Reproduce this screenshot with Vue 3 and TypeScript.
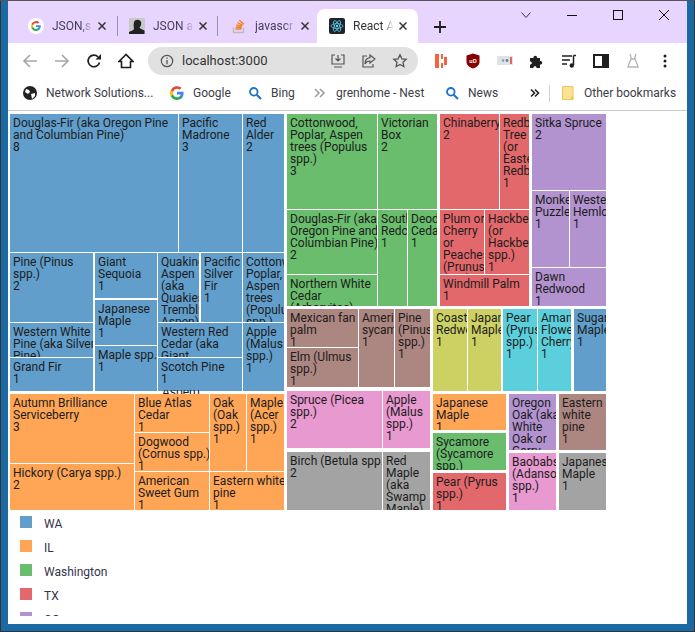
<template>
  <div class="window">
    <div class="tabstrip">
      <div class="tab tab-one">
        <svg class="fav" viewBox="0 0 16 16"><circle cx="8" cy="8" r="8" fill="#fff" /><path d="M12.8 8.2c0-.4 0-.7-.1-1H8v1.9h2.7a2.3 2.3 0 0 1-1 1.500v1.200h1.600c.9-.9 1.500-2.100 1.500-3.600z" fill="#4285f4" /><path d="M8 13c1.300 0 2.400-.4 3.300-1.200l-1.600-1.200c-.4.300-1 .5-1.700.5-1.300 0-2.400-.9-2.800-2H3.600v1.300A5 5 0 0 0 8 13z" fill="#34a853" /><path d="M5.200 9.100a3 3 0 0 1 0-2V5.800H3.600a5 5 0 0 0 0 4.500z" fill="#fbbc05" /><path d="M8 5c.7 0 1.400.3 1.900.7l1.400-1.400A5 5 0 0 0 3.600 5.800l1.600 1.300C5.600 5.900 6.700 5 8 5z" fill="#ea4335" /></svg>
        <span class="tab-title">JSON,s</span>
        <svg class="tab-close" viewBox="0 0 8 8"><path d="M.5.500l7 7M7.500.500l-7 7" /></svg>
      </div>
      <i class="tab-sep"></i>
      <div class="tab tab-two">
        <svg class="fav" viewBox="0 0 16 16"><rect width="16" height="16" fill="#c9c9c9" /><path d="M5 4c1-3 6-3 7 0 .5 2 0 4-1.500 5.500 1 1.500 3 2 5 3V16H0v-2c2-1 4-1.500 5-3C4.500 9 4.500 6 5 4z" fill="#222" /></svg>
        <span class="tab-title">JSON a</span>
        <svg class="tab-close" viewBox="0 0 8 8"><path d="M.5.500l7 7M7.500.500l-7 7" /></svg>
      </div>
      <i class="tab-sep tab-sep-wide"></i>
      <div class="tab tab-three">
        <svg class="fav" viewBox="0 0 16 16"><path d="M2.500 9.500v5h10v-5" fill="none" stroke="#bcbbbb" stroke-width="1.400" /><path d="M4.500 11h6M4.700 9l6 .5M5.300 6.800l5.800 1.600M6.400 4.500l5.300 2.800M8.300 2.200l4.500 4" stroke="#f48024" stroke-width="1.400" fill="none" /></svg>
        <span class="tab-title">javascr</span>
        <svg class="tab-close" viewBox="0 0 8 8"><path d="M.5.500l7 7M7.500.500l-7 7" /></svg>
      </div>
      <div class="tab tab-active">
        <svg class="fav" viewBox="0 0 16 16"><rect width="16" height="16" rx="2" fill="#20232a" /><g fill="none" stroke="#61dafb" stroke-width=".7"><ellipse cx="8" cy="8" rx="6" ry="2.400" /><ellipse cx="8" cy="8" rx="6" ry="2.400" transform="rotate(60 8 8)" /><ellipse cx="8" cy="8" rx="6" ry="2.400" transform="rotate(120 8 8)" /></g><circle cx="8" cy="8" r="1.200" fill="#61dafb" /></svg>
        <span class="tab-title">React A</span>
        <svg class="tab-close" viewBox="0 0 8 8"><path d="M.5.500l7 7M7.500.500l-7 7" /></svg>
      </div>
      <svg class="new-tab" viewBox="0 0 12 12"><path d="M6 0v12M0 6h12" stroke="#1f1f1f" stroke-width="1.800" /></svg>
      <div class="win-controls">
        <svg viewBox="0 0 12 12" width="12" height="12"><path d="M1.500 3.500l4.500 5 4.500-5" fill="none" stroke="#333" /></svg>
        <svg viewBox="0 0 12 12" width="12" height="12"><path d="M1 6.500h10" stroke="#111" /></svg>
        <svg viewBox="0 0 12 12" width="12" height="12"><rect x="1.500" y="1.500" width="9" height="9" fill="none" stroke="#111" /></svg>
        <svg viewBox="0 0 12 12" width="12" height="12"><path d="M1 1l10 10M11 1L1 11" stroke="#111" /></svg>
      </div>
    </div>

    <div class="toolbar">
      <svg class="nav" viewBox="0 0 16 16"><path d="M15 8H2M8 2L2 8l6 6" fill="none" stroke="#a8a8a8" stroke-width="1.700" /></svg>
      <svg class="nav" viewBox="0 0 16 16"><path d="M1 8h13M8 2l6 6-6 6" fill="none" stroke="#a8a8a8" stroke-width="1.700" /></svg>
      <svg class="nav" viewBox="0 0 16 16"><path d="M13.500 9.500A5.800 5.800 0 1 1 12 3.800" fill="none" stroke="#1f1f1f" stroke-width="1.700" /><path d="M9.500 6.500H15V1z" fill="#1f1f1f" /></svg>
      <svg class="nav" viewBox="0 0 16 16"><path d="M8 1.500L1 8.500h2.500v6h9v-6H15z" fill="none" stroke="#1f1f1f" stroke-width="1.600" /></svg>
      <div class="omnibox">
        <svg class="omni-info" viewBox="0 0 14 14"><circle cx="7" cy="7" r="5.700" fill="none" stroke="#555" stroke-width="1.200" /><path d="M7 6v4.200M7 3.600v1.200" stroke="#555" stroke-width="1.300" /></svg>
        <span class="omni-url">localhost:3000</span>
        <svg class="omni-icon omni-first" viewBox="0 0 16 16"><path d="M5 2H2v9h12V2h-3M4 14h8M8 2v6M5.500 5.500L8 8l2.500-2.500" fill="none" stroke="#555" stroke-width="1.200" /></svg>
        <svg class="omni-icon" viewBox="0 0 16 16"><path d="M6 3H2v11h10v-3M9 2l5 4-5 4V8C6.500 8 5 9 4 11c0-4 2-6 5-6.300z" fill="none" stroke="#555" stroke-width="1.200" /></svg>
        <svg class="omni-icon" viewBox="0 0 16 16"><path d="M8 1.800l1.900 4 4.300.5-3.200 3 .9 4.300L8 11.500l-3.900 2.100.9-4.300-3.200-3 4.300-.5z" fill="none" stroke="#555" stroke-width="1.300" /></svg>
      </div>
      <div class="extensions">
        <svg viewBox="0 0 16 16"><path d="M2 1h4v14H2zM8 1h2v5H8zM8 10h2v5H8zM11 4h3v8h-3z" fill="#f4633f" /></svg>
        <svg viewBox="0 0 16 16"><path d="M8 .5L14.500 2.500V9c0 3-3 5.500-6.500 6.500C4.500 14.500 1.500 12 1.500 9V2.500z" fill="#800" /><text x="8" y="9.500" class="ub">uD</text></svg>
        <svg viewBox="0 0 16 16"><rect y="3" width="16" height="9" fill="#dfe3e6" /><circle cx="6" cy="7.500" r="1.200" fill="#7a9cc0" /><circle cx="10" cy="7.500" r="1.400" fill="#5d7ba3" /><rect x="13" y="4" width="2" height="7" fill="#d96a5e" /></svg>
        <svg viewBox="0 0 16 16"><path d="M1 5h3.500c-.5-3 4-3 3.500 0H11v3c3-.5 3 4 0 3.500V15H7.500c.5-2.500-3.500-2.500-3 0H1v-3.500c2.500.5 2.500-3.500 0-3z" fill="#1f1f1f" /></svg>
        <svg viewBox="0 0 16 16"><path d="M1 3h10M1 7h8M1 11h5" stroke="#1f1f1f" stroke-width="1.500" /><path d="M12.500 2.500v9.500" stroke="#1f1f1f" stroke-width="1.500" /><circle cx="10.800" cy="12.500" r="2.200" fill="#1f1f1f" /><path d="M12.500 2.500H15" stroke="#1f1f1f" stroke-width="1.500" /></svg>
        <svg viewBox="0 0 16 16"><rect x="1" y="2" width="14" height="12" fill="#fff" stroke="#1f1f1f" stroke-width="2" /><rect x="9" y="2" width="6" height="12" fill="#1f1f1f" /></svg>
        <svg viewBox="0 0 16 16"><path d="M5 1l1.500 5M11 1L9.500 6M6 6c-1 3-2.500 5-3 8h10c-.5-3-2-5-3-8z" fill="none" stroke="#b5b5b5" stroke-width="1.300" /></svg>
        <svg viewBox="0 0 16 16"><circle cx="8" cy="3" r="1.500" fill="#1f1f1f" /><circle cx="8" cy="8" r="1.500" fill="#1f1f1f" /><circle cx="8" cy="13" r="1.500" fill="#1f1f1f" /></svg>
      </div>
    </div>

    <div class="bookmarks">
      <div class="mark mark-network">
        <svg viewBox="0 0 14 14"><circle cx="7" cy="7" r="7" fill="#222" /><path d="M3 3l3 1 1 2-2 2-3-2zM8 8l4-1 0 3-3 3z" fill="#fff" /></svg>
        <span>Network Solutions...</span>
      </div>
      <div class="mark mark-google">
        <svg viewBox="0 0 16 16"><path d="M15.500 8.200c0-.6 0-1-.1-1.500H8v2.900h4.300a3.600 3.600 0 0 1-1.600 2.400v2h2.600c1.500-1.400 2.200-3.400 2.200-5.800z" fill="#4285f4" /><path d="M8 16c2.100 0 3.900-.7 5.300-1.900l-2.600-2c-.7.500-1.600.8-2.700.8-2.100 0-3.800-1.400-4.400-3.200H1v2A8 8 0 0 0 8 16z" fill="#34a853" /><path d="M3.600 9.700a4.800 4.800 0 0 1 0-3.100v-2H1a8 8 0 0 0 0 7.100z" fill="#fbbc05" /><path d="M8 3.200c1.200 0 2.200.4 3 1.200l2.300-2.300A8 8 0 0 0 1 4.600l2.600 2C4.200 4.700 5.900 3.200 8 3.200z" fill="#ea4335" /></svg>
        <span>Google</span>
      </div>
      <div class="mark mark-bing">
        <svg viewBox="0 0 14 14"><circle cx="5.800" cy="5.800" r="3.800" fill="none" stroke="#1a73c8" stroke-width="1.800" /><path d="M8.700 8.700L13 13" stroke="#1a73c8" stroke-width="2" /></svg>
        <span>Bing</span>
      </div>
      <div class="mark mark-nest">
        <svg viewBox="0 0 14 14"><path d="M2 3l4 4-4 4M7 3l4 4-4 4" fill="none" stroke="#9a9a9a" stroke-width="1.500" /></svg>
        <span>grenhome - Nest</span>
      </div>
      <div class="mark mark-news">
        <svg viewBox="0 0 14 14"><circle cx="5.800" cy="5.800" r="3.800" fill="none" stroke="#1a73c8" stroke-width="1.800" /><path d="M8.700 8.700L13 13" stroke="#1a73c8" stroke-width="2" /></svg>
        <span>News</span>
      </div>
      <svg class="mark-more" viewBox="0 0 10 10"><path d="M1 1.500L4.500 5 1 8.500M5 1.500L8.500 5 5 8.500" fill="none" stroke="#222" stroke-width="1.600" /></svg>
      <i class="mark-sep"></i>
      <div class="mark mark-other">
        <svg viewBox="0 0 12 14"><path d="M.5.500h10.500v13H.5z" fill="#fde293" stroke="#e8c75c" /><rect x="9" y="10.500" width="2.500" height="3" fill="#f3ca4d" /></svg>
        <span>Other bookmarks</span>
      </div>
    </div>

    <div class="page">
      <div class="treemap">
        <div
          v-for="cell in cells"
          :key="cell.label + cell.x + cell.y"
          class="cell"
          :style="cellStyle(cell)"
        >
          <div class="cell-label">{{ cell.label }}</div>
          <div>{{ cell.size }}</div>
        </div>
        <!-- a clipped line that spills over the gap under the blue group -->
        <span class="spill">Aspen)</span>
      </div>
      <ul class="legend">
        <li v-for="item in legend" :key="item.name">
          <i class="swatch" :style="{ background: item.color }"></i>
          <span class="legend-name">{{ item.name }}</span>
        </li>
      </ul>
    </div>
  </div>
</template>

<script setup lang="ts">
interface Cell {
  label: string;
  size: number;
  color: string;
  // edges are in window pixels, converted to map offsets in cellStyle
  x: number;
  y: number;
  r: number;
  b: number;
}

const blue = '#619ecb';
const orange = '#ffa556';
const green = '#69bd6d';
const red = '#e3686b';
const purple = '#b293cf';
const brown = '#ac8680';
const pink = '#e899cf';
const gray = '#a3a3a3';
const yellow = '#cdd164';
const cyan = '#5ccfdc';

const row = (color: string, list: [string, number, number, number, number, number][]): Cell[] =>
  list.map(([label, size, x, y, r, b]) => ({ label, size, color, x, y, r, b }));

const cells: Cell[] = [
  ...row(blue, [
    ['Douglas-Fir (aka Oregon Pine and Columbian Pine)', 8, 10, 114, 178, 252],
    ['Pacific Madrone', 3, 179, 114, 242, 252],
    ['Red Alder', 2, 243, 114, 284, 252],
    ['Pine (Pinus spp.)', 2, 10, 253, 93, 322],
    ['Giant Sequoia', 1, 95, 253, 157, 298],
    ['Japanese Maple', 1, 95, 300, 157, 345],
    ['Maple spp.', 1, 95, 346, 157, 391],
    ['Quaking Aspen (aka Quakies Trembling Aspen)', 1, 158, 253, 199, 322],
    ['Pacific Silver Fir', 1, 201, 253, 242, 322],
    ['Cottonwood, Poplar, Aspen trees (Populus spp.)', 1, 243, 253, 284, 322],
    ['Western White Pine (aka Silver Pine)', 1, 10, 323, 93, 357],
    ['Grand Fir', 1, 10, 358, 93, 391],
    ['Western Red Cedar (aka Giant Arborvitae)', 1, 158, 323, 242, 357],
    ['Scotch Pine', 1, 158, 358, 242, 391],
    ['Apple (Malus spp.)', 1, 243, 323, 284, 391],
    ['Sugar Maple', 1, 574, 309, 606, 391],
  ]),
  ...row(green, [
    ['Cottonwood, Poplar, Aspen trees (Populus spp.)', 3, 287, 114, 377, 209],
    ['Victorian Box', 2, 378, 114, 437, 209],
    ['Douglas-Fir (aka Oregon Pine and Columbian Pine)', 2, 287, 210, 377, 274],
    ['Northern White Cedar (Arborvitae)', 1, 287, 275, 377, 306],
    ['Southern Redcedar', 1, 378, 210, 407, 306],
    ['Deodar Cedar', 1, 408, 210, 437, 306],
    ['Sycamore (Sycamore spp.)', 1, 433, 433, 506, 470],
  ]),
  ...row(red, [
    ['Chinaberry', 2, 440, 114, 499, 209],
    ['Redbud Tree (or Eastern Redbud)', 1, 500, 114, 529, 209],
    ['Plum or Cherry or Peaches (Prunus spp.)', 1, 440, 210, 484, 274],
    ['Hackberry (or Hackberry spp.)', 1, 485, 210, 529, 274],
    ['Windmill Palm', 1, 440, 275, 529, 306],
    ['Pear (Pyrus spp.)', 1, 433, 473, 506, 510],
  ]),
  ...row(purple, [
    ['Sitka Spruce', 2, 532, 114, 606, 190],
    ['Monkey Puzzle', 1, 532, 191, 569, 267],
    ['Western Hemlock', 1, 570, 191, 606, 267],
    ['Dawn Redwood', 1, 532, 268, 606, 306],
    ['Oregon Oak (aka White Oak or Garry Oak)', 1, 509, 394, 556, 450],
  ]),
  ...row(brown, [
    ['Mexican fan palm', 1, 287, 309, 358, 347],
    ['Elm (Ulmus spp.)', 1, 287, 348, 358, 387],
    ['American sycamore', 1, 359, 309, 394, 387],
    ['Pine (Pinus spp.)', 1, 395, 309, 430, 387],
    ['Eastern white pine', 1, 559, 394, 606, 450],
  ]),
  ...row(yellow, [
    ['Coast Redwood', 1, 433, 309, 467, 391],
    ['Japanese Maple', 1, 468, 309, 501, 391],
  ]),
  ...row(cyan, [
    ['Pear (Pyrus spp.)', 1, 503, 309, 537, 391],
    ['Amanogawa Flowering Cherry', 1, 538, 309, 571, 391],
  ]),
  ...row(orange, [
    ['Autumn Brilliance Serviceberry', 3, 10, 394, 134, 463],
    ['Hickory (Carya spp.)', 2, 10, 464, 134, 510],
    ['Blue Atlas Cedar', 1, 135, 394, 209, 432],
    ['Dogwood (Cornus spp.)', 1, 135, 433, 209, 471],
    ['American Sweet Gum', 1, 135, 472, 209, 510],
    ['Oak (Oak spp.)', 1, 210, 394, 246, 471],
    ['Maple (Acer spp.)', 1, 247, 394, 284, 471],
    ['Eastern white pine', 1, 210, 472, 284, 510],
    ['Japanese Maple', 1, 433, 394, 506, 430],
  ]),
  ...row(pink, [
    ['Spruce (Picea spp.)', 2, 287, 391, 382, 448],
    ['Apple (Malus spp.)', 1, 383, 391, 430, 448],
    ['Baobabs (Adansonia spp.)', 1, 509, 453, 556, 510],
  ]),
  ...row(gray, [
    ['Birch\u00a0(Betula\u00a0spp.)', 2, 287, 452, 382, 510],
    ['Red Maple (aka Swamp Maple)', 1, 383, 452, 430, 510],
    ['Japanese Maple', 1, 559, 453, 606, 510],
  ]),
];

const legend = [
  { name: 'WA', color: blue },
  { name: 'IL', color: orange },
  { name: 'Washington', color: green },
  { name: 'TX', color: red },
  { name: 'CO', color: purple },
];

// map origin is at window pixel (10, 114)
const cellStyle = (cell: Cell) => ({
  left: `${cell.x - 10}px`,
  top: `${cell.y - 114}px`,
  width: `${cell.r - cell.x}px`,
  height: `${cell.b - cell.y}px`,
  background: cell.color,
});
</script>

<style>
html,
body {
  margin: 0;
  overflow: hidden;
}
</style>

<style scoped>
.window {
  width: 695px;
  height: 632px;
  box-sizing: border-box;
  display: flex;
  flex-direction: column;
  padding: 1px 8px 8px;
  background: #1b6aa3;
  box-shadow: inset 0 1px 0 #555, inset 1px 0 0 #333, inset 0 -1px 0 #333, inset -1px 0 0 #333;
  font-family: "Roboto", "Liberation Sans", sans-serif;
  overflow: hidden;
}

.tabstrip {
  height: 42px;
  flex: none;
  display: flex;
  align-items: flex-end;
  padding-left: 12px;
  background: #e8d5ff;
}

.tab {
  height: 34px;
  box-sizing: border-box;
  flex: none;
  display: flex;
  align-items: center;
  padding: 0 8px;
  font-size: 12px;
  color: #45405a;
}

.tab-one {
  width: 97px;
}

.tab-two {
  width: 96px;
}

.tab-three {
  width: 94px;
}

.tab-active {
  width: 101px;
  padding-left: 12px;
  background: #fff;
  border-radius: 8px 8px 0 0;
  color: #333;
}

.fav {
  width: 16px;
  height: 16px;
  flex: none;
  margin-right: 8px;
}

.tab-title {
  width: 41px;
  overflow: hidden;
  white-space: nowrap;
  -webkit-mask-image: linear-gradient(90deg, #000 70%, transparent);
  mask-image: linear-gradient(90deg, #000 70%, transparent);
}

.tab-close {
  width: 8px;
  height: 8px;
  flex: none;
  margin-left: 5px;
  fill: none;
  stroke: #333;
  stroke-width: 1.500;
}

.tab-sep {
  width: 1px;
  height: 20px;
  flex: none;
  margin: 0 3px 7px 0;
  background: #9c8fa8;
}

.tab-sep-wide {
  margin-right: 5px;
}

.new-tab {
  width: 12px;
  height: 12px;
  flex: none;
  margin: 0 0 10px 16px;
}

.win-controls {
  align-self: flex-start;
  display: flex;
  gap: 34px;
  margin: 8px 0 0 74px;
}

.toolbar {
  height: 35px;
  flex: none;
  display: flex;
  align-items: center;
  padding-left: 14px;
  background: #fff;
}

.nav {
  width: 16px;
  height: 16px;
  flex: none;
  margin-right: 16px;
}

.omnibox {
  width: 270px;
  height: 28px;
  flex: none;
  margin-left: -2px;
  display: flex;
  align-items: center;
  box-sizing: border-box;
  padding: 0 10px 0 12px;
  border-radius: 14px;
  background: #e1e1e1;
}

.omni-info {
  width: 14px;
  height: 14px;
  flex: none;
}

.omni-url {
  margin-left: 8px;
  width: 148px;
  font-size: 13px;
  color: #333;
}

.omni-icon {
  width: 16px;
  height: 16px;
  flex: none;
  margin-left: 15px;
}

.omni-first {
  margin-left: 0;
}

.extensions {
  display: flex;
  gap: 16px;
  margin-left: 15px;
}

.extensions svg {
  width: 16px;
  height: 16px;
  flex: none;
}

.ub {
  font: 700 5.500px "Liberation Sans", sans-serif;
  fill: #fff;
  text-anchor: middle;
}

.bookmarks {
  height: 33px;
  flex: none;
  box-sizing: border-box;
  display: flex;
  align-items: center;
  padding-left: 15px;
  padding-bottom: 2px;
  background: #fff;
  border-bottom: 1px solid #c9c9c9;
  font-size: 12px;
  color: #3c3c48;
}

.mark {
  flex: none;
  display: flex;
  align-items: center;
  white-space: nowrap;
  gap: 9px;
}

.mark svg {
  width: 14px;
  height: 14px;
  flex: none;
}

.mark-network {
  width: 147px;
}

.mark-google {
  width: 78px;
}

.mark-bing {
  width: 65px;
}

.mark-nest {
  width: 132px;
}

.mark-news {
  width: 45px;
}

.mark-more {
  width: 10px;
  height: 10px;
  flex: none;
  margin-left: 40px;
}

.mark-sep {
  width: 1px;
  height: 17px;
  flex: none;
  margin: 0 12px 0 9px;
  background: #cfcfcf;
}

.mark-other {
  gap: 10px;
}

.mark-other svg {
  width: 12px;
  height: 14px;
}

.page {
  flex: 1;
  min-height: 0;
  overflow: hidden;
  background: #fff;
  padding: 3px 0 0 2px;
}

.treemap {
  position: relative;
  width: 596px;
  height: 396px;
  color: #1c1c1c;
  font-size: 12px;
  line-height: 12px;
}

.cell {
  position: absolute;
  box-sizing: border-box;
  padding: 3px 0 0 3px;
  overflow: hidden;
}

/* labels may run a little past the cell edge and get clipped */
.cell-label {
  margin-right: -4px;
}

.spill {
  position: absolute;
  left: 152px;
  top: 276px;
  height: 4px;
  line-height: 5px;
  overflow: hidden;
}

.legend {
  list-style: none;
  margin: 0;
  height: 106px;
  box-sizing: border-box;
  overflow: hidden;
  padding: 6px 0 0 10px;
  font-size: 12px;
  color: #33334a;
}

.legend li {
  height: 24px;
  display: flex;
  align-items: flex-start;
}

.legend-name {
  padding-top: 1px;
}

.swatch {
  width: 12px;
  height: 12px;
  flex: none;
  margin-right: 12px;
}
</style>
